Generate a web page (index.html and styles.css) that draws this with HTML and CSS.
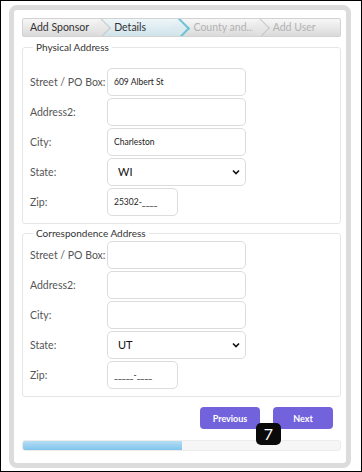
FILE: index.html
```html
<!DOCTYPE html>
<html lang="en">

<head>
    <meta charset="UTF-8">
    <meta name="viewport" content="width=device-width, initial-scale=1.0">
    <title>Sponsor Wizard - Details</title>
    <link rel="stylesheet" href="styles.css">
</head>

<body>
    <div class="screen">
        <div class="frame">
            <ul class="steps">
                <li class="step done">Add Sponsor</li>
                <li class="step active">Details</li>
                <li class="step">County and...</li>
                <li class="step last">Add User</li>
            </ul>

            <fieldset class="address physical">
                <legend>Physical Address</legend>
                <div class="row">
                    <label>Street / PO Box:</label>
                    <input type="text" class="field" value="609 Albert St">
                </div>
                <div class="row">
                    <label>Address2:</label>
                    <input type="text" class="field">
                </div>
                <div class="row">
                    <label>City:</label>
                    <input type="text" class="field" value="Charleston">
                </div>
                <div class="row">
                    <label>State:</label>
                    <div class="select">WI
                        <svg width="8" height="6" viewBox="0 0 8 6"><path d="M1 1.5 L4 4.5 L7 1.5" fill="none" stroke="#111" stroke-width="1.6"/></svg>
                    </div>
                </div>
                <div class="row">
                    <label>Zip:</label>
                    <input type="text" class="field zip" value="25302-____">
                </div>
            </fieldset>

            <fieldset class="address">
                <legend>Correspondence Address</legend>
                <div class="row">
                    <label>Street / PO Box:</label>
                    <input type="text" class="field">
                </div>
                <div class="row">
                    <label>Address2:</label>
                    <input type="text" class="field">
                </div>
                <div class="row">
                    <label>City:</label>
                    <input type="text" class="field">
                </div>
                <div class="row">
                    <label>State:</label>
                    <div class="select">UT
                        <svg width="8" height="6" viewBox="0 0 8 6"><path d="M1 1.5 L4 4.5 L7 1.5" fill="none" stroke="#111" stroke-width="1.6"/></svg>
                    </div>
                </div>
                <div class="row">
                    <label>Zip:</label>
                    <input type="text" class="field zip" value="_____-____">
                </div>
            </fieldset>

            <div class="actions">
                <button class="btn">Previous</button>
                <button class="btn">Next</button>
                <span class="badge">7</span>
            </div>

            <div class="progress">
                <div class="progress-fill" style="width: 50%"></div>
            </div>
        </div>
    </div>
</body>

</html>
```

FILE: styles.css
```css
* {
    box-sizing: border-box;
}

body {
    margin: 0;
    font-family: Lato, "Open Sans", sans-serif;
    background-color: #fff;
}

.screen {
    width: 362px;
    height: 472px;
    border: 1px solid #000;
    padding: 4px 10px 3px 8px;
    background-color: #fff;
}

.frame {
    height: 100%;
    border: 5px solid #dcdcdc;
    border-radius: 8px;
    background-color: #fff;
    padding: 8px 5px 0 8px;
}

/* wizard steps */
.steps {
    display: flex;
    list-style: none;
    margin: 0;
    padding: 0;
    height: 19px;
    border: 1px solid #d2d2d2;
    border-radius: 2px;
    background: linear-gradient(#f7f7f7, #dadada);
    overflow: hidden;
}

.step {
    position: relative;
    width: 80px;
    padding-left: 12px;
    font-size: 10.5px;
    line-height: 17px;
    color: #b2b2b2;
    white-space: nowrap;
}

.step:first-child {
    padding-left: 7px;
}

.step.done {
    color: #333;
}

.step.active {
    color: #333;
    background: linear-gradient(#eef6f9, #cfe3ea);
}

.step::after {
    content: "";
    position: absolute;
    top: 2px;
    right: -6px;
    width: 13px;
    height: 13px;
    transform: rotate(45deg);
    border-top: 1px solid #c6c6c6;
    border-right: 1px solid #c6c6c6;
    background: linear-gradient(135deg, #f2f2f2, #dcdcdc);
    z-index: 1;
}

.step.active::after {
    border-top: 2px solid #6cc3d8;
    border-right: 2px solid #6cc3d8;
    background: linear-gradient(135deg, #e8f2f6, #d0e3ea);
}

.step.last::after {
    display: none;
}

/* address blocks */
.address {
    margin: 3px 0 0 0;
    padding: 1px 7px 6px 7px;
    border: 1px solid #e6e6e6;
    border-radius: 3px;
}

.address legend {
    margin-left: 3px;
    padding: 0 3px;
    font-size: 10px;
    color: #333;
}

.address.physical {
    margin-top: 4px;
    padding-top: 14px;
}

.row {
    display: flex;
    align-items: center;
    height: 29px;
    margin-bottom: 1px;
}

.row label {
    width: 77px;
    font-size: 10.5px;
    color: #555;
}

.field {
    width: 139px;
    height: 28px;
    border: 1px solid #dcdcdc;
    border-radius: 5px;
    padding: 0 6px;
    font-family: inherit;
    font-size: 8.5px;
    color: #222;
    background-color: #fff;
}

.field.zip {
    width: 71px;
}

.select {
    display: flex;
    align-items: center;
    justify-content: space-between;
    width: 139px;
    height: 28px;
    border: 1px solid #dcdcdc;
    border-radius: 5px;
    padding: 0 5px 0 10px;
    font-size: 11px;
    color: #111;
}

/* buttons */
.actions {
    position: relative;
    display: flex;
    justify-content: flex-end;
    gap: 13px;
    padding-right: 8px;
    margin-top: 10px;
}

.btn {
    width: 60px;
    height: 22px;
    border: none;
    border-radius: 4px;
    background-color: #7262dc;
    color: #fff;
    font-family: inherit;
    font-size: 9px;
    font-weight: bold;
}

.badge {
    position: absolute;
    top: 16px;
    left: 234px;
    width: 25px;
    height: 22px;
    border-radius: 5px;
    background-color: #0a0a0a;
    color: #fff;
    font-size: 16px;
    line-height: 22px;
    text-align: center;
}

.progress {
    margin-top: 11px;
    height: 11px;
    border: 1px solid #ececec;
    border-radius: 3px;
    background-color: #f6f6f6;
    overflow: hidden;
}

.progress-fill {
    height: 100%;
    background: linear-gradient(#b6def5, #80c4ec);
}
```
